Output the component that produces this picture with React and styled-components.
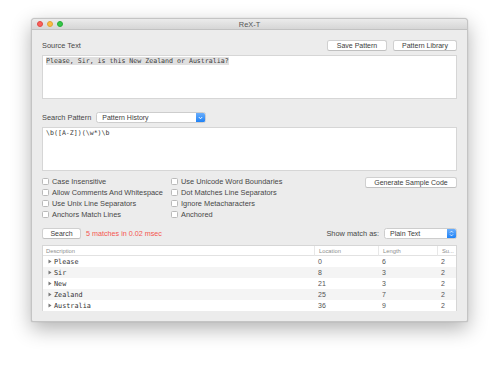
import styled, { createGlobalStyle } from 'styled-components'

const GlobalStyle = createGlobalStyle`
  html, body {
    margin: 0;
    padding: 0;
    background: #ffffff;
  }
  body {
    font-family: "Liberation Sans", Arial, sans-serif;
    color: #444444;
  }
`

const Page = styled.div`
  padding: 18px 0 40px 31px;
`

const Window = styled.div`
  width: 437px;
  height: 304px;
  box-sizing: border-box;
  border: 1px solid #c4c4c4;
  border-radius: 4px 4px 2px 2px;
  background: #ececec;
  box-shadow: 0 7px 20px rgba(0, 0, 0, 0.3), 0 0 1px rgba(0, 0, 0, 0.3);
  display: flex;
  flex-direction: column;
  overflow: hidden;
`

const TitleBar = styled.div`
  height: 10px;
  flex: none;
  position: relative;
  display: flex;
  align-items: center;
  justify-content: center;
  background: linear-gradient(#ebebeb, #d6d6d6);
  border-bottom: 1px solid #c2c2c2;
`

const Lights = styled.div`
  position: absolute;
  left: 5px;
  top: 2px;
  display: flex;
  gap: 4px;
`

const Light = styled.span`
  width: 6px;
  height: 6px;
  border-radius: 50%;
  box-sizing: border-box;
  background: ${(p) => p.$fill};
  border: 0.5px solid ${(p) => p.$edge};
`

const Title = styled.span`
  font-size: 7.4px;
  color: #555555;
`

const Content = styled.div`
  flex: 1;
  padding: 10px;
  display: flex;
  flex-direction: column;
`

const Row = styled.div`
  height: 11px;
  display: flex;
  align-items: center;
  gap: ${(p) => p.$gap || 6}px;
  margin-top: ${(p) => p.$top || 0}px;
`

const Label = styled.span`
  font-size: 7.4px;
  color: #474747;
  white-space: nowrap;
`

const Spacer = styled.div`
  flex: 1;
`

const Button = styled.div`
  height: 11px;
  box-sizing: border-box;
  width: ${(p) => p.$w}px;
  background: #ffffff;
  border: 1px solid #d0d0d0;
  border-bottom-color: #c0c0c0;
  border-radius: 2.5px;
  display: flex;
  align-items: center;
  justify-content: center;
  font-size: 7px;
  color: #3c3c3c;
  white-space: nowrap;
`

const TextArea = styled.div`
  height: 44px;
  box-sizing: border-box;
  margin-top: 4px;
  background: #ffffff;
  border: 1px solid #d6d6d6;
  padding: 1px 3px;
  font-family: "DejaVu Sans Mono", monospace;
  font-size: 6.6px;
  line-height: 8px;
  color: #3a3a3a;
`

const Selected = styled.span`
  background: #e0e0e0;
`

const Select = styled.div`
  width: ${(p) => p.$w}px;
  height: 11px;
  box-sizing: border-box;
  display: flex;
  background: #ffffff;
  border: 1px solid #cdcdcd;
  border-radius: 2.5px;
  overflow: hidden;
`

const SelectText = styled.span`
  flex: 1;
  font-size: 7px;
  color: #3c3c3c;
  padding-left: 5px;
  line-height: 9px;
  white-space: nowrap;
`

const SelectArrow = styled.span`
  width: 9px;
  flex: none;
  display: flex;
  align-items: center;
  justify-content: center;
  background: linear-gradient(#6aaefc, #1f82f6);
`

const Options = styled.div`
  margin-top: 5px;
  display: grid;
  grid-template-columns: 129px 1fr auto;
  grid-auto-rows: 11px;
`

const Option = styled.label`
  display: flex;
  align-items: center;
  gap: 3px;
  font-size: 7.4px;
  color: #474747;
  white-space: nowrap;
`

const Box = styled.span`
  width: 7px;
  height: 7px;
  box-sizing: border-box;
  background: #ffffff;
  border: 1px solid #bababa;
  border-radius: 1.5px;
`

const GenerateCell = styled.div`
  grid-column: 3;
  grid-row: 1;
  display: flex;
  align-items: flex-start;
  padding-top: 1px;
`

const Status = styled.span`
  font-size: 7.2px;
  color: #f4554f;
  white-space: nowrap;
`

const Table = styled.div`
  margin-top: 6px;
  height: 66px;
  box-sizing: border-box;
  background: #ffffff;
  border: 1px solid #d6d6d6;
  display: grid;
  grid-template-columns: 271px 64px 59px 1fr;
  grid-template-rows: 10px repeat(5, 11px);
`

const HeadCell = styled.div`
  font-size: 5.8px;
  color: #8e8e8e;
  padding-left: ${(p) => (p.$first ? 3 : 4)}px;
  display: flex;
  align-items: center;
  border-bottom: 1px solid #e2e2e2;
  border-left: ${(p) => (p.$first ? 'none' : '1px solid #e8e8e8')};
  white-space: nowrap;
  overflow: hidden;
`

const Cell = styled.div`
  display: flex;
  align-items: center;
  padding-left: ${(p) => (p.$first ? 5 : 4)}px;
  gap: 2px;
  background: ${(p) => (p.$odd ? '#f4f4f4' : '#ffffff')};
  font-size: 7px;
  color: #555555;
`

const Word = styled.span`
  font-family: "DejaVu Sans Mono", monospace;
  font-size: 6.8px;
  color: #333333;
`

const Triangle = () => (
  <svg width='4' height='5' viewBox='0 0 4 5'>
    <path d='M0.5 0.5 L3.5 2.5 L0.5 4.5 Z' fill='#777777' />
  </svg>
)

const ChevronDown = () => (
  <svg width='5' height='4' viewBox='0 0 5 4'>
    <path d='M0.8 1 L2.5 2.8 L4.2 1' fill='none' stroke='#fff' strokeWidth='0.9' />
  </svg>
)

const UpDown = () => (
  <svg width='5' height='7' viewBox='0 0 5 7'>
    <path d='M1 2.6 L2.5 1.1 L4 2.6 M1 4.4 L2.5 5.9 L4 4.4' fill='none' stroke='#fff' strokeWidth='0.8' />
  </svg>
)

const leftOptions = [
  'Case Insensitive',
  'Allow Comments And Whitespace',
  'Use Unix Line Separators',
  'Anchors Match Lines',
]
const rightOptions = [
  'Use Unicode Word Boundaries',
  'Dot Matches Line Separators',
  'Ignore Metacharacters',
  'Anchored',
]

const matches = [
  ['Please', 0, 6, 2],
  ['Sir', 8, 3, 2],
  ['New', 21, 3, 2],
  ['Zealand', 25, 7, 2],
  ['Australia', 36, 9, 2],
]

const App = () => (
  <Page>
    <GlobalStyle />
    <Window>
      <TitleBar>
        <Lights>
          <Light $fill='#fc605b' $edge='#de4843' />
          <Light $fill='#fdbc40' $edge='#dea236' />
          <Light $fill='#34c84a' $edge='#27aa35' />
        </Lights>
        <Title>ReX-T</Title>
      </TitleBar>
      <Content>
        <Row>
          <Label>Source Text</Label>
          <Spacer />
          <Button $w={60}>Save Pattern</Button>
          <Button $w={64}>Pattern Library</Button>
        </Row>
        <TextArea>
          <Selected>Please, Sir, is this New Zealand or Australia?</Selected>
        </TextArea>
        <Row $top={13} $gap={5}>
          <Label>Search Pattern</Label>
          <Select $w={110}>
            <SelectText>Pattern History</SelectText>
            <SelectArrow>
              <ChevronDown />
            </SelectArrow>
          </Select>
        </Row>
        <TextArea>{'\\b([A-Z])(\\w*)\\b'}</TextArea>
        <Options>
          {leftOptions.map((o, i) => (
            <Option key={o} style={{ gridColumn: 1, gridRow: i + 1 }}>
              <Box />
              {o}
            </Option>
          ))}
          {rightOptions.map((o, i) => (
            <Option key={o} style={{ gridColumn: 2, gridRow: i + 1 }}>
              <Box />
              {o}
            </Option>
          ))}
          <GenerateCell>
            <Button $w={92}>Generate Sample Code</Button>
          </GenerateCell>
        </Options>
        <Row $top={8} $gap={5}>
          <Button $w={39}>Search</Button>
          <Status>5 matches in 0.02 msec</Status>
          <Spacer />
          <Label>Show match as:</Label>
          <Select $w={73}>
            <SelectText>Plain Text</SelectText>
            <SelectArrow>
              <UpDown />
            </SelectArrow>
          </Select>
        </Row>
        <Table>
          <HeadCell $first>Description</HeadCell>
          <HeadCell>Location</HeadCell>
          <HeadCell>Length</HeadCell>
          <HeadCell>Su...</HeadCell>
          {matches.map(([word, loc, len, sub], i) => [
            <Cell key={word + 'w'} $first $odd={i % 2 === 1}>
              <Triangle />
              <Word>{word}</Word>
            </Cell>,
            <Cell key={word + 'l'} $odd={i % 2 === 1}>{loc}</Cell>,
            <Cell key={word + 'n'} $odd={i % 2 === 1}>{len}</Cell>,
            <Cell key={word + 's'} $odd={i % 2 === 1}>{sub}</Cell>,
          ])}
        </Table>
      </Content>
    </Window>
  </Page>
)

export default App
